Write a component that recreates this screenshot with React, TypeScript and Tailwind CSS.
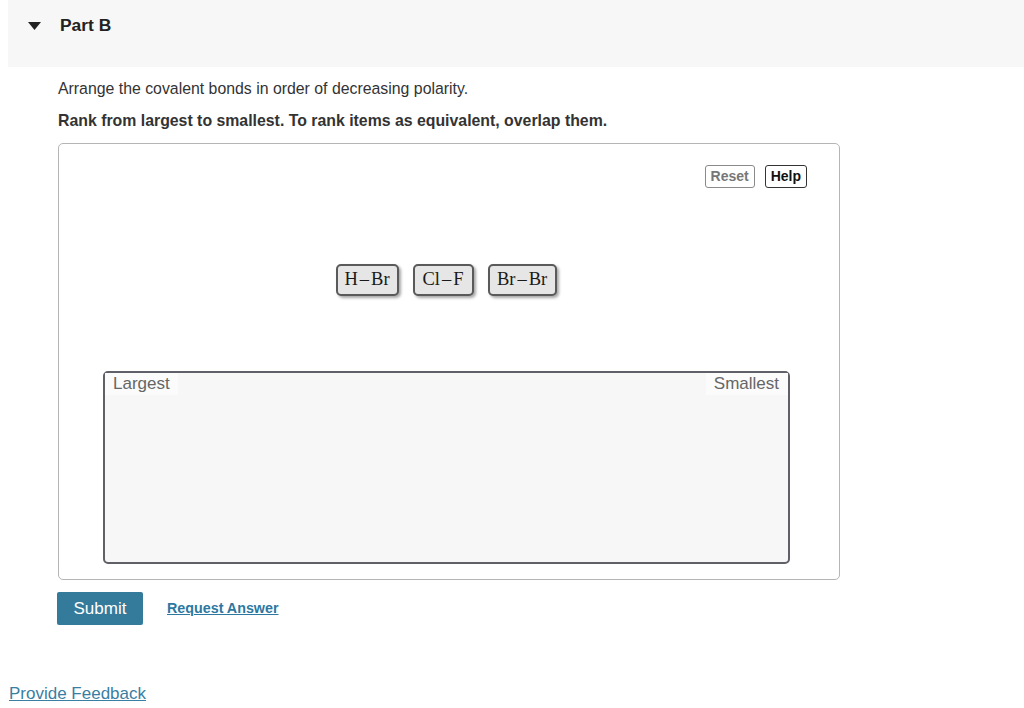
import React from "react";

const bonds = [
  { left: "H", right: "Br", width: "w-[63px]" },
  { left: "Cl", right: "F", width: "w-[61px]" },
  { left: "Br", right: "Br", width: "w-[69px]" },
];

function BondChip({ left, right, width }: { left: string; right: string; width: string }) {
  return (
    <div
      className={`flex h-[32px] ${width} items-center justify-center rounded-[5px] border-2 border-[#5a5a5a] bg-[#e6e6e6] shadow-[2px_2px_3px_rgba(0,0,0,0.35)] text-[18.5px] text-[#1a1a1a]`}
      style={{ fontFamily: '"Liberation Serif", "DejaVu Serif", serif' }}
    >
      <span>{left}</span>
      <span className="mx-[2px]">–</span>
      <span>{right}</span>
    </div>
  );
}

export default function App() {
  return (
    <div
      className="min-h-[708px] w-[1024px] bg-white text-[#333]"
      style={{ fontFamily: '"Liberation Sans", Arial, sans-serif' }}
    >
      {/* part header */}
      <div className="ml-[8px] flex h-[67px] items-start bg-[#f7f7f7] pt-[15px]">
        <svg width="13" height="8" viewBox="0 0 13 8" className="ml-[20px] mt-[7px]">
          <polygon points="0,0 13,0 6.5,8" fill="#222" />
        </svg>
        <span className="ml-[19px] text-[17.4px] font-bold leading-[20px] text-[#222]">Part B</span>
      </div>

      <div className="pl-[58px]">
        <p className="mt-[12px] text-[15.85px] leading-[20px]">
          Arrange the covalent bonds in order of decreasing polarity.
        </p>
        <p className="mt-[12px] text-[15.85px] font-bold leading-[20px]">
          Rank from largest to smallest. To rank items as equivalent, overlap them.
        </p>

        {/* ranking widget */}
        <div className="mt-[12px] flex h-[437px] w-[782px] flex-col rounded-[5px] border border-[#b5b5b5] bg-white">
          <div className="mt-[21px] flex justify-end gap-[10px] pr-[32px]">
            <button className="h-[23px] rounded-[3px] border border-[#8a8a8a] px-[5px] text-[14px] font-bold text-[#777]">
              Reset
            </button>
            <button className="h-[23px] rounded-[3px] border border-[#333] px-[5px] text-[14px] font-bold text-[#111]">
              Help
            </button>
          </div>

          <div className="mt-[76px] flex justify-center gap-[14px] pr-[6px]">
            {bonds.map((b) => (
              <BondChip key={b.left + b.right} {...b} />
            ))}
          </div>

          <div className="ml-[44px] mt-[75px] flex h-[193px] w-[687px] items-start justify-between rounded-[5px] border-2 border-[#5f6068] bg-[#f7f7f7]">
            <span className="bg-[#fbfbfb] pl-[8px] pr-[8px] text-[17px] leading-[22px] text-[#666]">
              Largest
            </span>
            <span className="bg-[#fbfbfb] pl-[8px] pr-[9px] text-[17px] leading-[22px] text-[#666]">
              Smallest
            </span>
          </div>
        </div>

        <div className="mt-[12px] flex items-center">
          <button className="-ml-[1px] h-[33px] w-[86px] rounded-[2px] bg-[#347a9b] text-[17px] text-white">
            Submit
          </button>
          <a className="ml-[24px] text-[14.3px] font-bold text-[#2d78a0] underline">Request Answer</a>
        </div>
      </div>

      <a className="ml-[9px] mt-[59px] block w-fit text-[17px] leading-[20px] text-[#3a7ea3] underline">
        Provide Feedback
      </a>
    </div>
  );
}
